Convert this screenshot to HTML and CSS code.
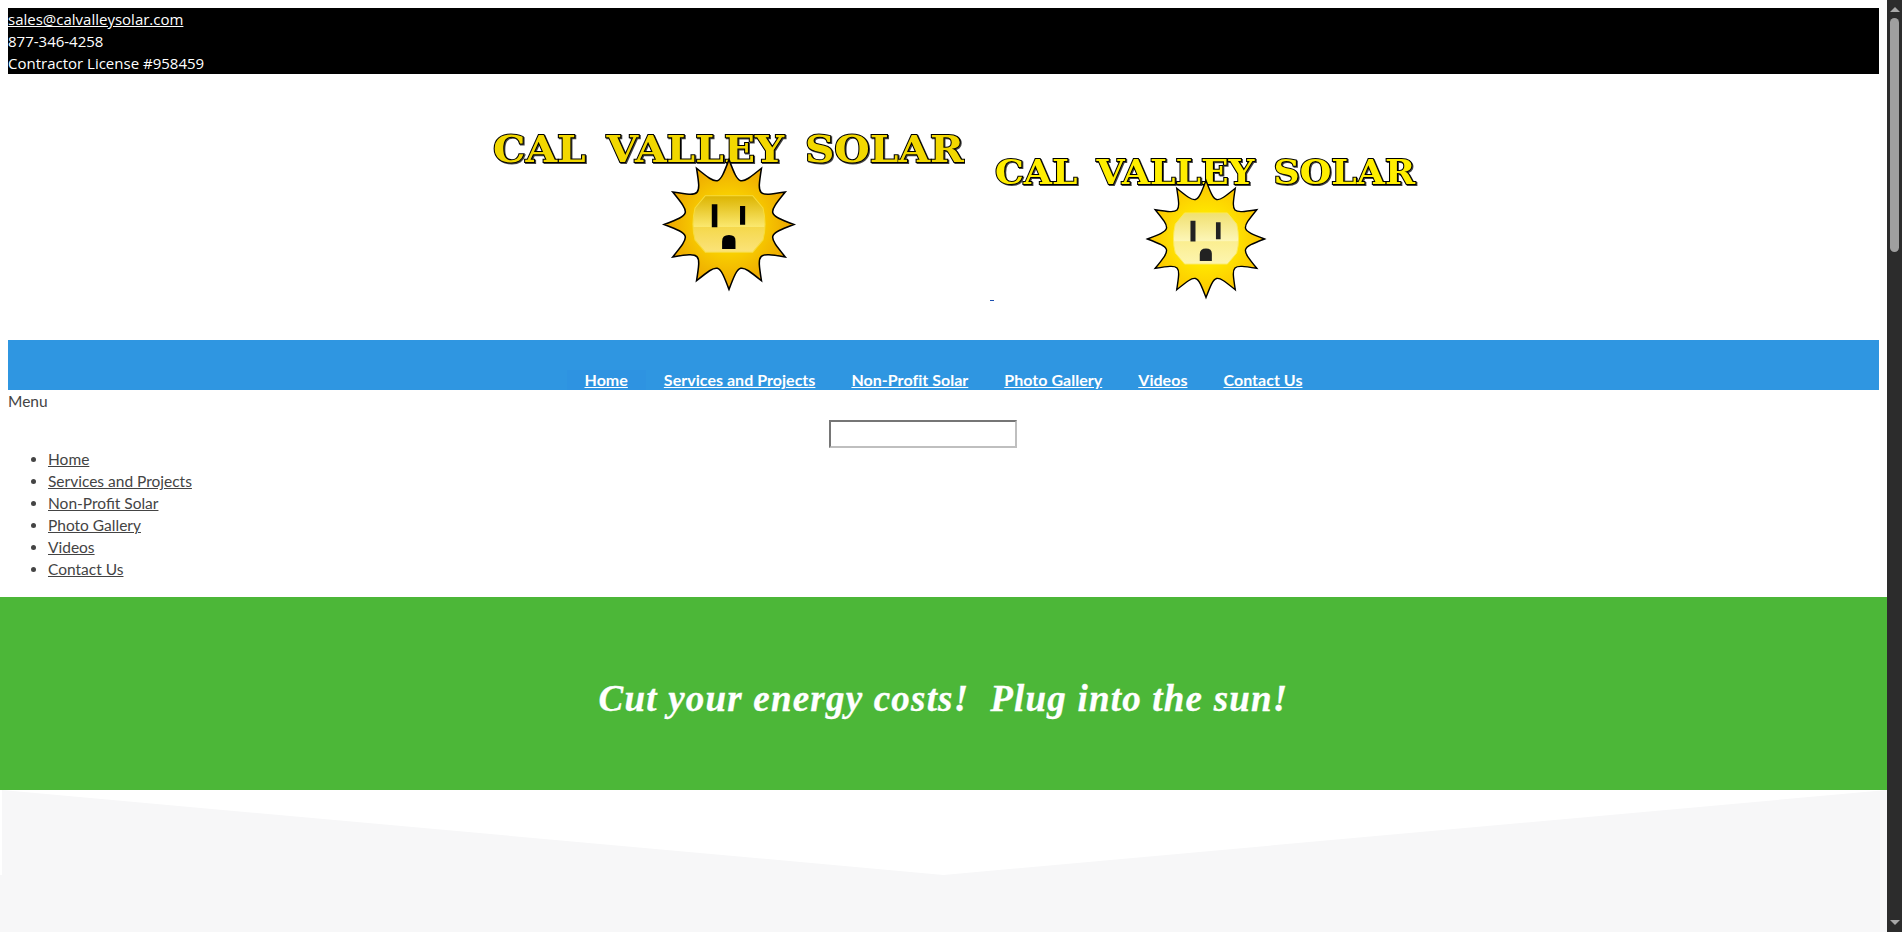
FILE: index.html
```html
<!DOCTYPE html>
<html lang="en">
<head>
  <meta charset="UTF-8" />
  <meta name="viewport" content="width=device-width, initial-scale=1.0" />
  <title>Cal Valley Solar</title>
  <link rel="stylesheet" href="styles.css">
</head>
<body>
  <div class="page">
    <div class="wrap">
      <div class="topbar">
        <a href="#">sales@calvalleysolar.com</a><br>
        877-346-4258<br>
        Contractor License #958459
      </div>

      <div class="logos">
        <svg class="logo-one" width="500" height="180" viewBox="0 0 500 180">
          <defs>
            <radialGradient id="sunA">
              <stop offset="0.45" stop-color="#f9cf00" />
              <stop offset="1" stop-color="#eca400" />
            </radialGradient>
            <linearGradient id="plateA" x1="0" y1="0" x2="0" y2="1">
              <stop offset="0" stop-color="#dcb400" />
              <stop offset="0.55" stop-color="#fbe86f" />
              <stop offset="0.56" stop-color="#f5d84c" />
              <stop offset="1" stop-color="#fbe37a" />
            </linearGradient>
          </defs>
          <text class="logo-text fill-a" x="28" y="38" textLength="471" lengthAdjust="spacingAndGlyphs">CAL VALLEY SOLAR</text>
          <g transform="translate(264 100.5) scale(1.03)">
            <path class="sun" fill="url(#sunA)" d="M0-63C9.9-37.1 9.9-37.1 31.5-54.6C27.2-27.2 27.2-27.2 54.6-31.5C37.1-9.9 37.1-9.9 63 0C37.1 9.9 37.1 9.9 54.6 31.5C27.2 27.2 27.2 27.2 31.5 54.6C9.9 37.1 9.9 37.1 0 63C-9.9 37.1-9.9 37.1-31.5 54.6C-27.2 27.2-27.2 27.2-54.6 31.5C-37.1 9.9-37.1 9.9-63 0C-37.1-9.9-37.1-9.9-54.6-31.5C-27.2-27.2-27.2-27.2-31.5-54.6C-9.9-37.1-9.9-37.1 0-63Z" />
            <path fill="url(#plateA)" stroke="#f7dc3c" d="M-23-28H23L33-16Q37 0 33 15L23 27H-23L-33 15Q-37 0-33-16Z" />
            <path fill="#000" d="M-16.7-19.7H-11.3V2.7H-16.7ZM10.7-18H15.7V.3H10.7ZM-6.7 23.7V16.5Q-6.7 10.3 0 10.3T6.3 16.5V23.7Z" />
          </g>
        </svg>
        <a class="logo-link" href="#"></a>
        <svg class="logo-two" width="428" height="160" viewBox="0 0 428 160">
          <defs>
            <radialGradient id="sunB">
              <stop offset="0.45" stop-color="#ffe600" />
              <stop offset="1" stop-color="#fbc400" />
            </radialGradient>
            <linearGradient id="plateB" x1="0" y1="0" x2="0" y2="1">
              <stop offset="0" stop-color="#f0e070" />
              <stop offset="0.55" stop-color="#fdf6b8" />
              <stop offset="0.56" stop-color="#fbee90" />
              <stop offset="1" stop-color="#fdf5b0" />
            </linearGradient>
          </defs>
          <text class="logo-text fill-b" x="1" y="40" textLength="420" lengthAdjust="spacingAndGlyphs">CAL VALLEY SOLAR</text>
          <g transform="translate(212 95) scale(.93)">
            <path class="sun" fill="url(#sunB)" d="M0-63C9.9-37.1 9.9-37.1 31.5-54.6C27.2-27.2 27.2-27.2 54.6-31.5C37.1-9.9 37.1-9.9 63 0C37.1 9.9 37.1 9.9 54.6 31.5C27.2 27.2 27.2 27.2 31.5 54.6C9.9 37.1 9.9 37.1 0 63C-9.9 37.1-9.9 37.1-31.5 54.6C-27.2 27.2-27.2 27.2-54.6 31.5C-37.1 9.9-37.1 9.9-63 0C-37.1-9.9-37.1-9.9-54.6-31.5C-27.2-27.2-27.2-27.2-31.5-54.6C-9.9-37.1-9.9-37.1 0-63Z" />
            <path fill="url(#plateB)" stroke="#fbe95a" d="M-23-28H23L33-16Q37 0 33 15L23 27H-23L-33 15Q-37 0-33-16Z" />
            <path fill="#222" d="M-16.7-19.7H-11.3V2.7H-16.7ZM10.7-18H15.7V.3H10.7ZM-6.7 23.7V16.5Q-6.7 10.3 0 10.3T6.3 16.5V23.7Z" />
          </g>
        </svg>
      </div>

      <nav class="mainnav">
        <a class="active" href="#">Home</a>
        <a href="#">Services and Projects</a>
        <a href="#">Non-Profit Solar</a>
        <a href="#">Photo Gallery</a>
        <a href="#">Videos</a>
        <a href="#">Contact Us</a>
      </nav>

      <div class="mobile-menu">
        <div>Menu</div>
        <form class="search"><input type="text" /></form>
        <ul>
          <li><a href="#">Home</a></li>
          <li><a href="#">Services and Projects</a></li>
          <li><a href="#">Non-Profit Solar</a></li>
          <li><a href="#">Photo Gallery</a></li>
          <li><a href="#">Videos</a></li>
          <li><a href="#">Contact Us</a></li>
        </ul>
      </div>
    </div>

    <div class="banner">
      <h2>Cut your energy costs!&nbsp; Plug into the sun!</h2>
    </div>

    <div class="wedge">
      <div class="notch"></div>
    </div>
  </div>

  <div class="scrollbar">
    <span class="arrow-up"></span>
    <span class="thumb"></span>
    <span class="arrow-down"></span>
  </div>
</body>
</html>
```

FILE: styles.css
```css
html, body {
  height: 100%;
  overflow: hidden;
}
body {
  margin: 0;
  display: flex;
  background-color: #fff;
  color: #444;
  font-family: Lato, sans-serif;
  font-size: 15.5px;
  line-height: 22px;
}
.page {
  flex: 1;
  min-width: 0;
  display: flex;
  flex-direction: column;
}
.wrap {
  padding: 8px 8px 0;
}
.topbar {
  background-color: #000;
  color: #fff;
  font-family: "Open Sans", sans-serif;
  font-size: 15px;
}
.topbar a {
  color: #fff;
}
.logos {
  height: 266px;
  box-sizing: border-box;
  padding-top: 45px;
  display: flex;
  justify-content: center;
  align-items: flex-start;
}
.logo-one {
  margin-top: 5px;
  flex: none;
}
.logo-link {
  flex: none;
  width: 4px;
  height: 161px;
  margin-left: 25px;
  border-bottom: 1px solid #1a4fb0;
  margin-top: 20px;
}
.logo-two {
  flex: none;
  margin-top: 25px;
}
.logo-text {
  font-family: "DejaVu Serif", serif;
  font-weight: bold;
  font-size: 37px;
  word-spacing: 6px;
  stroke: #000;
  stroke-width: 2px;
  paint-order: stroke;
  filter: drop-shadow(1px 1px 0 #444);
}
.fill-a {
  fill: #f2d800;
}
.fill-b {
  fill: #ffee00;
  font-size: 33px;
}
.sun {
  stroke: #000;
  stroke-width: 1.5;
  stroke-linejoin: miter;
}
.mainnav {
  height: 50px;
  box-sizing: border-box;
  padding-top: 28px;
  background-color: #2f96e1;
  display: flex;
  justify-content: center;
  align-items: flex-end;
  font-size: 16px;
  font-weight: bold;
  letter-spacing: .03px;
  line-height: 20px;
}
.mainnav a {
  color: #fff;
  padding: 0 18px;
}
.mainnav a.active {
  background-color: #2e93e1;
}
.mobile-menu a {
  color: #444;
}
.search {
  padding: 8px 41px 0 0;
  text-align: center;
  height: 28px;
}
.search input {
  display: inline-block;
  box-sizing: border-box;
  width: 188px;
  height: 28px;
  margin: 0;
  background: #fff;
  border: 2px solid;
  border-color: #767676 #bfbfbf #bfbfbf #767676;
  vertical-align: top;
}
.mobile-menu ul {
  margin: 0 0 17px;
  padding-left: 40px;
}
.banner {
  height: 193px;
  box-sizing: border-box;
  padding-top: 10px;
  background-color: #4cb738;
  color: #fff;
  display: flex;
  align-items: center;
  justify-content: center;
}
.banner h2 {
  margin: 0;
  font-family: "Liberation Serif", serif;
  font-style: italic;
  font-weight: bold;
  font-size: 37px;
  letter-spacing: 1.2px;
  line-height: 44px;
  -webkit-text-stroke: .3px #fff;
}
.wedge {
  flex: 1;
  background-color: #f7f7f8;
}
.notch {
  height: 85px;
  background-color: #fff;
  clip-path: polygon(0 0, 100% 0, 50% 100%, 2px 0, 2px 100%, 0 100%);
}
.scrollbar {
  flex: none;
  width: 15px;
  background-color: #2c2c2c;
  display: flex;
  flex-direction: column;
  align-items: center;
  padding: 7px 0;
  box-sizing: border-box;
}
.arrow-up {
  border: 5px solid transparent;
  border-top: 0;
  border-bottom-color: #a8a8a8;
}
.thumb {
  width: 9px;
  height: 234px;
  margin-top: 6px;
  border-radius: 5px;
  background-color: #9f9f9f;
}
.arrow-down {
  margin-top: auto;
  border: 5px solid transparent;
  border-bottom: 0;
  border-top-color: #a8a8a8;
}
```
